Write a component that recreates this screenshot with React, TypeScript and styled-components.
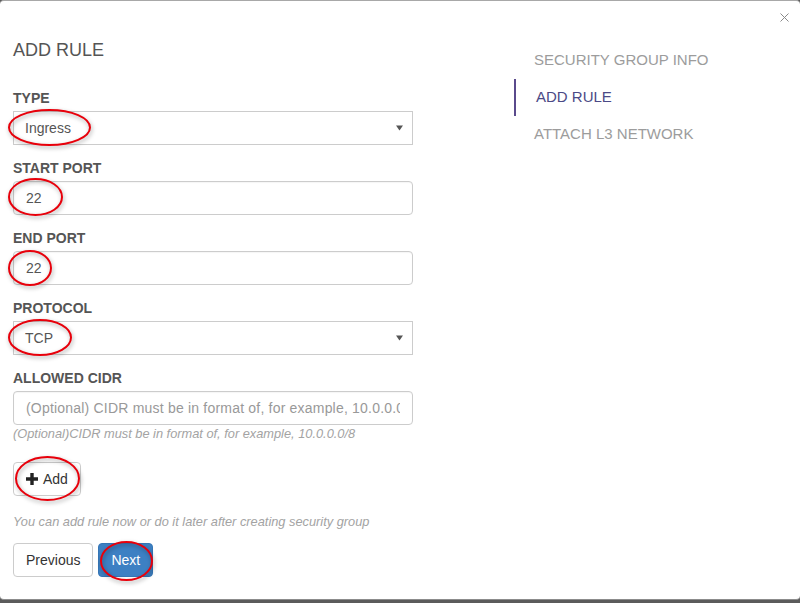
import React from "react";
import styled, { createGlobalStyle } from "styled-components";

const Global = createGlobalStyle`
  html, body { margin: 0; padding: 0; background: #5b5b5b; }
  body { font-family: "Liberation Sans", Arial, sans-serif; }
  * { box-sizing: border-box; }
`;

const Modal = styled.div`
  position: relative;
  width: 800px;
  height: 600px;
  background: #fff;
  border-top: 1px solid #a8a8a8;
  border-bottom: 1px solid #8c8c8c;
  border-radius: 4px;
  display: grid;
  grid-template-columns: 400px 1fr;
  column-gap: 101px;
  align-items: start;
  padding: 39px 0 0 13px;
`;

const CloseButton = styled.button`
  position: absolute;
  top: 11px;
  right: 10px;
  width: 11px;
  height: 11px;
  padding: 0;
  border: 0;
  background: transparent;
  display: flex;
  align-items: center;
  justify-content: center;
`;

const FormColumn = styled.div`
  display: flex;
  flex-direction: column;
  align-items: flex-start;
`;

const Title = styled.h3`
  margin: 0 0 28px;
  font-size: 18px;
  line-height: 20px;
  font-weight: normal;
  color: #555;
`;

const FormGroup = styled.div<{ $last?: boolean }>`
  display: flex;
  flex-direction: column;
  width: 100%;
  margin-bottom: ${(p) => (p.$last ? "0" : "13px")};
`;

const Label = styled.label`
  font-size: 14px;
  line-height: 20px;
  font-weight: bold;
  color: #555;
  margin-bottom: 3px;
`;

const SelectBox = styled.div`
  height: 34px;
  width: 100%;
  border: 1px solid #ccc;
  display: flex;
  align-items: center;
  justify-content: space-between;
  padding: 0 9px 0 11px;
  font-size: 14px;
  color: #555;
`;

const TextInput = styled.input`
  height: 34px;
  width: 100%;
  border: 1px solid #ccc;
  border-radius: 4px;
  padding: 6px 12px;
  font-family: "Liberation Sans", Arial, sans-serif;
  font-size: 14px;
  line-height: 20px;
  color: #555;
  box-shadow: inset 0 1px 1px rgba(0, 0, 0, 0.04);
  outline: none;
  &::placeholder { color: #999; letter-spacing: 0.2px; }
`;

const Help = styled.p<{ $gap?: number }>`
  margin: ${(p) => p.$gap ?? 0}px 0 0;
  font-size: 12.8px;
  line-height: 17px;
  font-style: italic;
  color: #a3a3a3;
`;

const Button = styled.button<{ $primary?: boolean; $gap?: number }>`
  height: 34px;
  padding: 6px 12px;
  margin-top: ${(p) => p.$gap ?? 0}px;
  display: inline-flex;
  align-items: center;
  gap: 5px;
  font-family: "Liberation Sans", Arial, sans-serif;
  font-size: 14px;
  line-height: 20px;
  border-radius: 4px;
  border: 1px solid ${(p) => (p.$primary ? "#3676b6" : "#ccc")};
  background: ${(p) => (p.$primary ? "#3d80c3" : "#fff")};
  color: ${(p) => (p.$primary ? "#fff" : "#333")};
`;

const ButtonRow = styled.div`
  display: flex;
  gap: 5px;
  margin-top: 13px;
`;

const Nav = styled.nav`
  display: flex;
  flex-direction: column;
  margin-top: 2px;
`;

const NavItem = styled.div<{ $active?: boolean }>`
  height: 37px;
  padding: 8px 0 9px ${(p) => (p.$active ? 20 : 18)}px;
  border-left: 2px solid ${(p) => (p.$active ? "#5a4a8c" : "transparent")};
  font-size: 15px;
  line-height: 20px;
  color: ${(p) => (p.$active ? "#4b4a86" : "#9c9c9c")};
`;

const Annotations = styled.svg`
  position: absolute;
  top: 0;
  left: 0;
  width: 800px;
  height: 603px;
  pointer-events: none;
  overflow: visible;
  filter: drop-shadow(1px 2px 2px rgba(0, 0, 0, 0.35));
`;

const Arrow = () => (
  <svg width="7" height="6" viewBox="0 0 7 6">
    <path d="M0 0.5 H7 L3.5 5.5 Z" fill="#555" />
  </svg>
);

const Plus = () => (
  <svg width="12" height="12" viewBox="0 0 12 12">
    <path d="M4.3 0 H7.7 V4.3 H12 V7.7 H7.7 V12 H4.3 V7.7 H0 V4.3 H4.3 Z" fill="#222" />
  </svg>
);

const ellipses = [
  { cx: 49.5, cy: 126.5, rx: 40.5, ry: 17.5 },
  { cx: 35.5, cy: 196, rx: 26.5, ry: 18 },
  { cx: 30, cy: 267, rx: 21, ry: 17 },
  { cx: 40, cy: 336.5, rx: 31, ry: 17.5 },
  { cx: 47.5, cy: 477.5, rx: 31.5, ry: 21.5 },
  { cx: 126.5, cy: 560, rx: 25.5, ry: 19 },
];

export default function App() {
  return (
    <>
      <Global />
      <Modal>
        <CloseButton aria-label="close">
          <svg width="9" height="9" viewBox="0 0 9 9">
            <path d="M0.5 0.5 L8.5 8.5 M8.5 0.5 L0.5 8.5" stroke="#8a8a8a" strokeWidth="1" />
          </svg>
        </CloseButton>
        <FormColumn>
          <Title>ADD RULE</Title>
          <FormGroup>
            <Label>TYPE</Label>
            <SelectBox>
              <span>Ingress</span>
              <Arrow />
            </SelectBox>
          </FormGroup>
          <FormGroup>
            <Label>START PORT</Label>
            <TextInput defaultValue="22" />
          </FormGroup>
          <FormGroup>
            <Label>END PORT</Label>
            <TextInput defaultValue="22" />
          </FormGroup>
          <FormGroup>
            <Label>PROTOCOL</Label>
            <SelectBox>
              <span>TCP</span>
              <Arrow />
            </SelectBox>
          </FormGroup>
          <FormGroup $last>
            <Label>ALLOWED CIDR</Label>
            <TextInput placeholder="(Optional) CIDR must be in format of, for example, 10.0.0.0/8" />
          </FormGroup>
          <Help>(Optional)CIDR must be in format of, for example, 10.0.0.0/8</Help>
          <Button $gap={20}>
            <Plus />
            Add
          </Button>
          <Help $gap={17}>You can add rule now or do it later after creating security group</Help>
          <ButtonRow>
            <Button>Previous</Button>
            <Button $primary>Next</Button>
          </ButtonRow>
        </FormColumn>
        <Nav>
          <NavItem>SECURITY GROUP INFO</NavItem>
          <NavItem $active>ADD RULE</NavItem>
          <NavItem>ATTACH L3 NETWORK</NavItem>
        </Nav>
        <Annotations viewBox="0 0 800 603">
          {ellipses.map((e, i) => (
            <ellipse key={i} cx={e.cx} cy={e.cy} rx={e.rx} ry={e.ry} fill="none" stroke="#e8000b" strokeWidth="2" />
          ))}
        </Annotations>
      </Modal>
    </>
  );
}
